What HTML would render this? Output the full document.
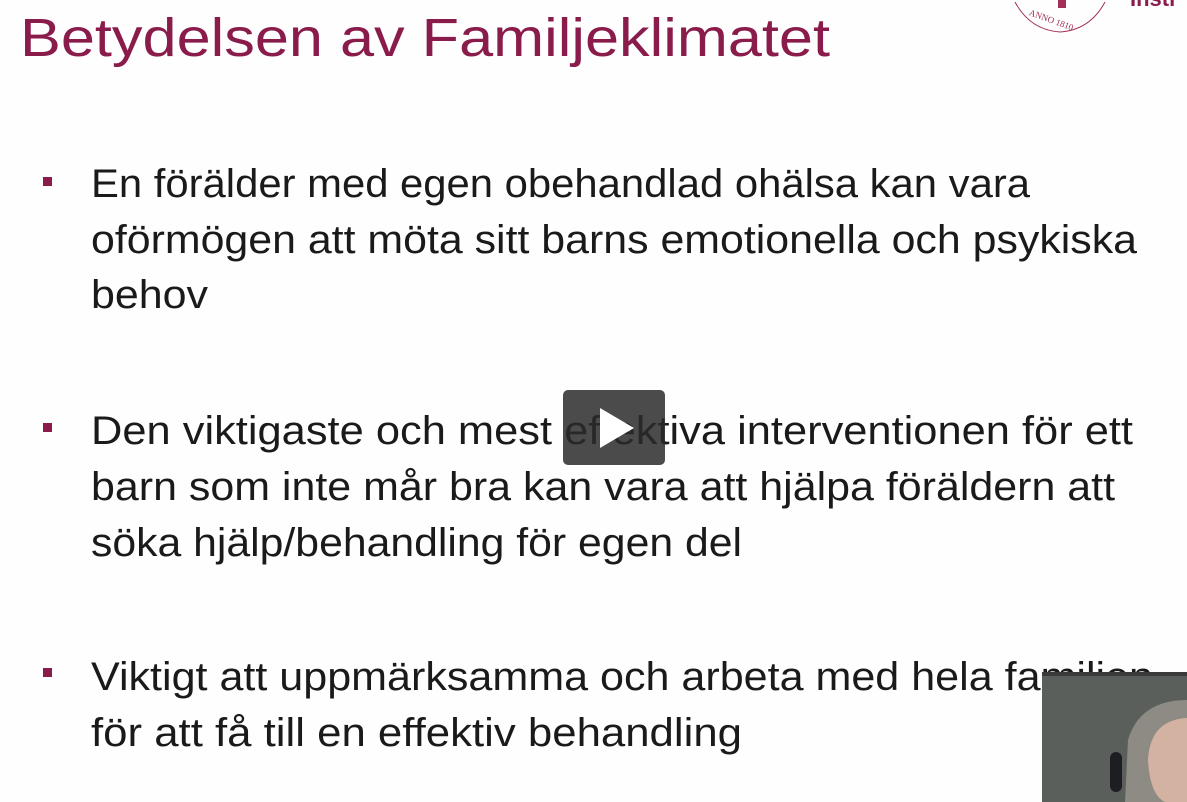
<!DOCTYPE html>
<html><head><meta charset="utf-8"><style>
html,body{margin:0;padding:0;background:#fff;}
svg{display:block}
</style></head><body>
<svg width="1187" height="802" viewBox="0 0 1187 802" xmlns="http://www.w3.org/2000/svg">
<rect width="1187" height="802" fill="#fefefe"/>
<g font-family="Liberation Sans, sans-serif">
<text x="20" y="56" font-size="54" fill="#8a1c4c" textLength="810" lengthAdjust="spacingAndGlyphs">Betydelsen av Familjeklimatet</text>
<g font-size="40" fill="#1a1a1a">
<text x="91" y="197" textLength="939" lengthAdjust="spacingAndGlyphs">En förälder med egen obehandlad ohälsa kan vara</text>
<text x="91" y="253" textLength="1046" lengthAdjust="spacingAndGlyphs">oförmögen att möta sitt barns emotionella och psykiska</text>
<text x="91" y="308" textLength="117" lengthAdjust="spacingAndGlyphs">behov</text>
<text x="91" y="444" textLength="1042" lengthAdjust="spacingAndGlyphs">Den viktigaste och mest effektiva interventionen för ett</text>
<text x="91" y="500" textLength="1024" lengthAdjust="spacingAndGlyphs">barn som inte mår bra kan vara att hjälpa föräldern att</text>
<text x="91" y="556" textLength="651" lengthAdjust="spacingAndGlyphs">söka hjälp/behandling för egen del</text>
<text x="91" y="690" textLength="1062" lengthAdjust="spacingAndGlyphs">Viktigt att uppmärksamma och arbeta med hela familjen</text>
<text x="91" y="746" textLength="651" lengthAdjust="spacingAndGlyphs">för att få till en effektiv behandling</text>
</g>
</g>
<g fill="#8a1c4c">
<rect x="43" y="177" width="9" height="9"/>
<rect x="43" y="423" width="9" height="9"/>
<rect x="43" y="668" width="9" height="9"/>
</g>
<!-- logo -->
<g fill="none" stroke="#a0305a" stroke-width="1">
<path d="M1015 2 Q1030 30 1060 32 Q1090 30 1105 2"/>
</g>
<text x="1028" y="26" font-family="Liberation Serif, serif" font-size="9" fill="#a0305a" transform="rotate(20 1060 22)">ANNO 1810</text>
<path d="M1058 0 h8 v8 h-8z" fill="#a0305a"/>
<text x="1130" y="6" font-family="Liberation Sans, sans-serif" font-weight="bold" font-size="22" fill="#8a1c4c">Insti</text>
<!-- play button -->
<rect x="563" y="390" width="102" height="75" rx="5" fill="#2c2c2c" fill-opacity="0.85"/>
<path d="M600 408 L634 428 L600 448 Z" fill="#fff"/>
<!-- webcam -->
<rect x="1042" y="672" width="145" height="130" fill="#5b5f5b"/>
<rect x="1042" y="672" width="145" height="4" fill="#3a3a3a"/>
<path d="M1187 700 Q1140 700 1128 740 L1125 802 L1187 802 Z" fill="#8e8a84"/>
<path d="M1187 718 Q1150 720 1148 760 Q1150 795 1165 802 L1187 802 Z" fill="#d4b2a2"/>
<rect x="1110" y="752" width="12" height="40" rx="6" fill="#1c1e22"/>
</svg>
</body></html>
